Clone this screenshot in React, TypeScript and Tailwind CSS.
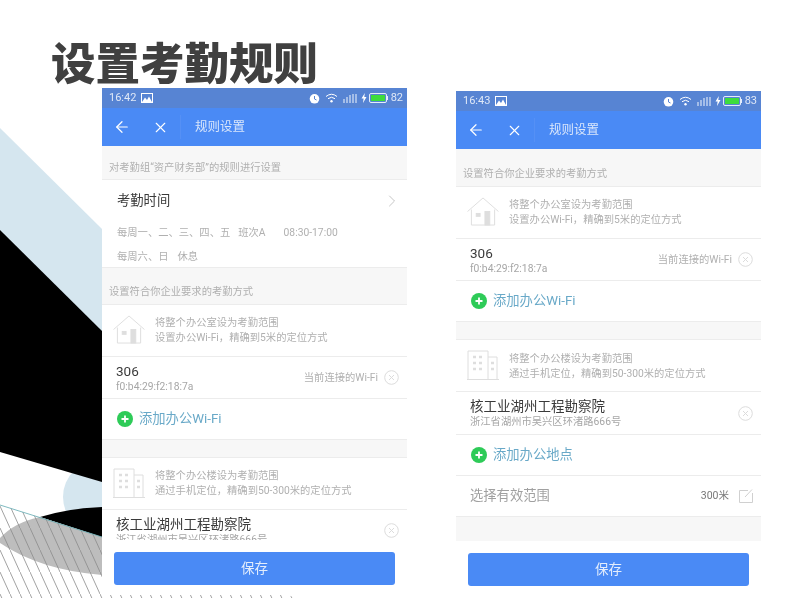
import type { ReactNode } from 'react';
import { ArrowLeft, ChevronRight, X } from 'lucide-react';

// decorative slide background, drawn behind the phones
const SlideArt = () => (
    <svg className="absolute inset-0" width="800" height="598" viewBox="0 0 800 598">
        <defs>
            <pattern id="hatch" width="10" height="22" patternUnits="userSpaceOnUse">
                <path d="M0 0L10 22" stroke="#8a8a8a" strokeWidth="0.8" />
            </pattern>
        </defs>
        <polygon points="0,128 102,229 102,345 0,245" fill="#d5e6ef" />
        <circle cx="100" cy="497" r="37" fill="#d5e6ef" />
        <polygon points="0,230 102,331 102,482 0,452" fill="#000" />
        <polygon points="0,505 102,537 297,598 0,598" fill="#fff" />
        <path d="M40 517Q70 508 102 507L102 537Z" fill="#000" />
        <path d="M0 538Q15 522 40 517L102 537L102 575Q40 570 0 543Z" fill="#bdbdbd" />
        <polygon points="0,505 102,537 297,598 0,598" fill="url(#hatch)" />
        <path d="M0 505L102 537" stroke="#5fa8b0" strokeWidth="0.8" />
    </svg>
);

const StatusBar = ({ time, level }: { time: string; level: string }) => (
    <div className="h-5 bg-[#5784d3] flex items-center pl-[7px] pr-[4px] text-[11px] text-[#dfe8f7] shrink-0">
        <span>{time}</span>
        <svg className="ml-[5px]" width="12" height="10" viewBox="0 0 12 10">
            <rect x="0.5" y="0.5" width="11" height="9" fill="none" stroke="#fff" />
            <path d="M1 9L4 4.5L6 7L8 3.5L11 9Z" fill="#fff" />
        </svg>
        <div className="flex-1" />
        <svg width="11" height="11" viewBox="0 0 11 11">
            <circle cx="5.5" cy="5.8" r="4.8" fill="#fff" />
            <path d="M5.5 3V6L7.5 7" stroke="#5784d3" strokeWidth="1" fill="none" />
        </svg>
        <svg className="ml-[5px]" width="13" height="10" viewBox="0 0 13 10">
            <path d="M1 3.5Q6.5 -1 12 3.5M3 5.7Q6.5 2.8 10 5.7" stroke="#fff" strokeWidth="1" fill="none" />
            <circle cx="6.5" cy="8.3" r="1.2" fill="#fff" />
        </svg>
        <svg className="ml-[5px]" width="15" height="11" viewBox="0 0 15 11">
            <path d="M1 6V10M4 4V10M7 2V10M10 1V10M13 1V10" stroke="#f2f6fd" strokeWidth="1" />
        </svg>
        <svg className="ml-[3px]" width="6" height="10" viewBox="0 0 6 10">
            <path d="M3.8 0L0.5 5.6H2.6L2 10L5.5 4H3.3Z" fill="#fff" />
        </svg>
        <svg className="ml-[2px]" width="19" height="10" viewBox="0 0 19 10">
            <rect x="0.5" y="0.5" width="17" height="9" rx="1.5" fill="none" stroke="#e4ecfa" />
            <rect x="2" y="2" width="14" height="6" fill="#3ddc3d" />
            <rect x="18" y="3" width="1" height="4" fill="#e4ecfa" />
        </svg>
        <span className="ml-[3px]">{level}</span>
    </div>
);

const AppHeader = () => (
    <div className="h-[38px] bg-[#4a8af5] flex items-center text-white shrink-0">
        <ArrowLeft className="ml-[11px]" size={18} strokeWidth={1.6} />
        <X className="ml-[21px]" size={17} strokeWidth={1.6} />
        <div className="ml-[11px] w-px h-6 bg-[#5590f5]" />
        <span className="ml-[14px] text-[12.5px] text-[#d9e6fb]">规则设置</span>
    </div>
);

const SectionLabel = ({ text, className }: { text: string; className: string }) => (
    <div className={`${className} bg-[#f7f7f7] border-b border-[#ececec] flex items-end pl-[7px] text-[10.3px] text-[#b0b0b0] shrink-0`}>
        {text}
    </div>
);

const HouseIcon = () => (
    <svg className="mb-[3px]" width="34" height="29" viewBox="0 0 34 30" fill="none" stroke="#dedede" strokeWidth="1">
        <path d="M1 15L17 1L33 15" />
        <path d="M5 13V29H29V13" />
        <rect x="10" y="17" width="4" height="3" fill="#dedede" />
        <rect x="19" y="15" width="5" height="14" fill="#dedede" />
    </svg>
);

const BuildingIcon = () => (
    <svg className="mb-[2px]" width="34" height="30" viewBox="0 0 34 30" fill="none" stroke="#dedede" strokeWidth="1">
        <path d="M1 29.5H33" />
        <path d="M2 29V1H22V29M22 7H31V29" />
        <path d="M7 7H10M13 7H16M7 13H10M13 13H16M7 19H10M13 19H16M25 13H28M25 19H28" strokeWidth="2.6" />
    </svg>
);

const MethodIntro = ({ icon, lines, textClass }: { icon: ReactNode; lines: [string, string]; textClass: string }) => (
    <div className="h-[52px] flex items-center pl-[10px] border-b border-[#ececec] shrink-0">
        {icon}
        <div className={`${textClass} ml-[9px] text-[10.3px] leading-[15px] text-[#b0b0b0]`}>
            <div>{lines[0]}</div>
            <div>{lines[1]}</div>
        </div>
    </div>
);

const CloseDot = () => (
    <svg className="shrink-0" width="15" height="15" viewBox="0 0 15 15" fill="none" stroke="#dcdcdc">
        <circle cx="7.5" cy="7.5" r="6.8" />
        <path d="M5 5L10 10M10 5L5 10" />
    </svg>
);

const SavedRow = ({ title, detail, note, className }: { title: string; detail: string; note?: string; className: string }) => (
    <div className={`${className} flex items-center pl-[14px] pr-[8px] border-b border-[#ececec] shrink-0`}>
        <div className="flex-1">
            <div className="text-[13.5px] leading-[18px] text-[#3a3a3a]">{title}</div>
            <div className="text-[10.3px] leading-[14px] text-[#a6a6a6]">{detail}</div>
        </div>
        {note && <span className="mr-[6px] text-[10.3px] text-[#b0b0b0]">{note}</span>}
        <CloseDot />
    </div>
);

const AddRow = ({ text }: { text: string }) => (
    <div className="h-[41px] flex items-center pl-[15px] pb-[1px] border-b border-[#ececec] shrink-0">
        <svg width="16" height="16" viewBox="0 0 16 16">
            <circle cx="8" cy="8" r="8" fill="#2ecb58" />
            <path d="M4.5 8H11.5M8 4.5V11.5" stroke="#fff" strokeWidth="1.8" />
        </svg>
        <span className="ml-[6px] text-[13.3px] text-[#69a9c8]">{text}</span>
    </div>
);

const Spacer = ({ className }: { className: string }) => (
    <div className={`${className} bg-[#f7f7f7] border-b border-[#ececec] shrink-0`} />
);

const SaveFooter = ({ className }: { className: string }) => (
    <div className={`${className} bg-white px-3 pt-3 shrink-0`}>
        <div className="h-[33px] rounded-[3px] bg-[#4a8af5] flex items-center justify-center text-[13.5px] text-[#e3edfc]">保存</div>
    </div>
);

const Phone = ({ time, level, className, children, footer }: { time: string; level: string; className: string; children: ReactNode; footer: string }) => (
    <div className={`${className} flex flex-col bg-white`}>
        <StatusBar time={time} level={level} />
        <AppHeader />
        <div className="flex-1 min-h-0 overflow-hidden flex flex-col">{children}</div>
        <SaveFooter className={footer} />
    </div>
);

const houseLines: [string, string] = ['将整个办公室设为考勤范围', '设置办公Wi-Fi，精确到5米的定位方式'];
const buildingLines: [string, string] = ['将整个办公楼设为考勤范围', '通过手机定位，精确到50-300米的定位方式'];

export default function App() {
    return (
        <div className="relative w-[800px] h-[598px] overflow-hidden bg-white blur-[0.3px] font-['Roboto','Noto_Sans_CJK_SC',sans-serif]">
            <SlideArt />

            <div className="relative h-[88px] pl-[51px] pt-[33px]">
                <h1 className="text-[44.5px] leading-[64px] font-black text-[#404040]">设置考勤规则</h1>
            </div>

            <div className="relative flex pl-[102px] gap-[49px]">
                {/* left phone */}
                <Phone time="16:42" level="82" className="w-[305px] h-[507px]" footer="h-[55px]">
                    <SectionLabel text="对考勤组“资产财务部”的规则进行设置" className="h-[34px] pb-[4px]" />
                    <div className="h-[88px] border-b border-[#ececec] pl-[15px] pr-[5px] shrink-0">
                        <div className="h-[41px] flex items-center justify-between text-[13.3px] text-[#3a3a3a]">
                            考勤时间
                            <ChevronRight size={20} strokeWidth={1} className="text-[#bbb]" />
                        </div>
                        <div className="text-[10.3px] leading-[24px] text-[#b0b0b0]">
                            <div className="flex">
                                <span>每周一、二、三、四、五</span>
                                <span className="ml-[8px]">班次A</span>
                                <span className="ml-[18px]">08:30-17:00</span>
                            </div>
                            <div className="flex">
                                <span>每周六、日</span>
                                <span className="ml-[9px]">休息</span>
                            </div>
                        </div>
                    </div>
                    <SectionLabel text="设置符合你企业要求的考勤方式" className="h-[37px] pb-[5px]" />
                    <MethodIntro icon={<HouseIcon />} lines={houseLines} textClass="pb-[1px]" />
                    <SavedRow className="h-[42px]" title="306" detail="f0:b4:29:f2:18:7a" note="当前连接的Wi-Fi" />
                    <AddRow text="添加办公Wi-Fi" />
                    <Spacer className="h-[18px]" />
                    <MethodIntro icon={<BuildingIcon />} lines={buildingLines} textClass="pb-[1px]" />
                    <SavedRow className="h-[42px]" title="核工业湖州工程勘察院" detail="浙江省湖州市吴兴区环渚路666号" />
                </Phone>

                {/* right phone */}
                <Phone time="16:43" level="83" className="w-[305px] h-[507px] mt-[3px]" footer="h-[57px]">
                    <SectionLabel text="设置符合你企业要求的考勤方式" className="h-[38px] pb-[5px]" />
                    <MethodIntro icon={<HouseIcon />} lines={houseLines} textClass="pb-[1px]" />
                    <SavedRow className="h-[42px]" title="306" detail="f0:b4:29:f2:18:7a" note="当前连接的Wi-Fi" />
                    <AddRow text="添加办公Wi-Fi" />
                    <Spacer className="h-[18px]" />
                    <MethodIntro icon={<BuildingIcon />} lines={buildingLines} textClass="pb-0" />
                    <SavedRow className="h-[43px]" title="核工业湖州工程勘察院" detail="浙江省湖州市吴兴区环渚路666号" />
                    <AddRow text="添加办公地点" />
                    <div className="h-[41px] flex items-center pl-[14px] pr-[8px] border-b border-[#ececec] shrink-0">
                        <span className="flex-1 text-[13.3px] text-[#a0a0a0]">选择有效范围</span>
                        <span className="text-[10.5px] text-[#777]">300米</span>
                        <svg className="ml-[10px]" width="14" height="14" viewBox="0 0 14 14" fill="none" stroke="#d0d0d0">
                            <path d="M9 1.5H0.5V13.5H13.5V4M6 8L13 0.5" />
                        </svg>
                    </div>
                    <div className="flex-1 bg-[#f7f7f7]" />
                </Phone>
            </div>
        </div>
    );
}
